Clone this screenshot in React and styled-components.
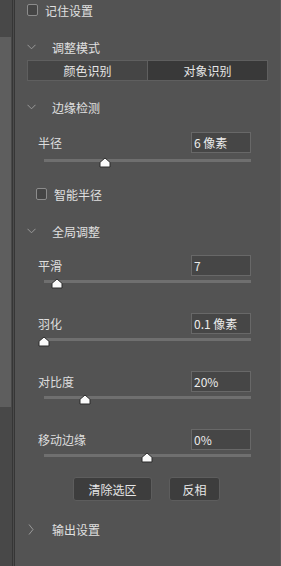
import React from "react";
import styled, { createGlobalStyle } from "styled-components";

const GlobalStyle = createGlobalStyle`
    html, body {
        margin: 0;
        padding: 0;
        background: #535353;
    }
    body {
        font-family: "Noto Sans CJK SC", "Liberation Sans", sans-serif;
        font-size: 12px;
        color: #dedede;
    }
`

const Frame = styled.div`
    display: flex;
    width: 281px;
    height: 566px;
    overflow: hidden;
`
const ScrollTrack = styled.div`
    width: 12px;
    background: #484848;
    display: flex;
    flex-direction: column;
`
const ScrollThumb = styled.div`
    margin-top: 37px;
    width: 11px;
    height: 370px;
    background: #5e5e5e;
`
const Divider = styled.div`
    width: 1px;
    background: #4b4b4b;
    border-left: 1px solid #363636;
    border-right: 1px solid #363636;
`
const Panel = styled.div`
    flex: 1;
    display: flex;
    flex-direction: column;
    background: #535353;
    border-right: 1px solid #5c5c5c;
`
const CheckRow = styled.label`
    display: flex;
    align-items: center;
    height: 20px;
    margin-top: ${p => p.mt || 0}px;
    padding-left: ${p => p.pl}px;
    gap: 7px;
    color: #e0e0e0;
`
const Box = styled.span`
    width: 9px;
    height: 10px;
    border: 1px solid #8c8c8c;
    border-radius: 2px;
    background: #454545;
`
const Header = styled.div`
    display: flex;
    align-items: center;
    height: 20px;
    margin-top: ${p => p.mt}px;
    padding-left: 12px;
    color: #e0e0e0;
`
const ChevronBox = styled.span`
    width: 25px;
    display: flex;
    align-items: center;
`
const Segmented = styled.div`
    display: flex;
    height: 19px;
    margin: 3px 12px 0 12px;
    border: 1px solid #5f5f5f;
`
const Segment = styled.div`
    flex: 1;
    display: flex;
    align-items: center;
    justify-content: center;
    background: ${p => p.active ? '#393939' : '#454545'};
    color: #e6e6e6;
    & + & {
        border-left: 1px solid #5f5f5f;
    }
`
const SliderBlock = styled.div`
    display: flex;
    flex-direction: column;
    margin-top: ${p => p.mt}px;
    padding: 0 29px 0 23px;
`
const LabelRow = styled.div`
    display: flex;
    align-items: center;
    justify-content: space-between;
    height: 21px;
`
const ValueBox = styled.div`
    box-sizing: border-box;
    width: 60px;
    height: 21px;
    padding-left: 2px;
    display: flex;
    align-items: center;
    background: #464646;
    border: 1px solid #686868;
    color: #ececec;
`
const Track = styled.div`
    position: relative;
    height: 3px;
    margin: ${p => p.gap}px 0 0 6px;
    background: #6f6f6f;
`
const Knob = styled.svg`
    position: absolute;
    top: -2px;
    width: 12px;
    height: 11px;
`
const ButtonRow = styled.div`
    display: flex;
    gap: 17px;
    margin-top: 20px;
    padding-left: 58px;
`
const Button = styled.button`
    box-sizing: border-box;
    width: ${p => p.w}px;
    height: 24px;
    padding: 0;
    background: #3d3d3d;
    border: 1px solid #5d5d5d;
    border-radius: 3px;
    color: #e6e6e6;
    font-family: "Noto Sans CJK SC", "Liberation Sans", sans-serif;
    font-size: 12px;
`

const ChevronDown = () => (
    <svg width="9" height="6" viewBox="0 0 9 6">
        <path d="M0.5 0.8 L4.5 4.8 L8.5 0.8" fill="none" stroke="#9a9a9a" strokeWidth="1" />
    </svg>
)
const ChevronRight = () => (
    <svg width="7" height="11" viewBox="0 0 7 11" style={{marginLeft: 1}}>
        <path d="M1 0.5 L5 5.5 L1 10.5" fill="none" stroke="#9a9a9a" strokeWidth="1" />
    </svg>
)

const Slider = ({label, value, pct, mt, gap = 4}) => (
    <SliderBlock mt={mt}>
        <LabelRow>
            <span>{label}</span>
            <ValueBox>{value}</ValueBox>
        </LabelRow>
        <Track gap={gap}>
            <Knob viewBox="0 0 12 11" style={{left: `calc(${pct}% - 6px)`}}>
                <path d="M1 10 L1 5.3 L6 1 L11 5.3 L11 10 Z" fill="#fafafa" stroke="#2b2b2b" strokeWidth="1" strokeLinejoin="round" />
            </Knob>
        </Track>
    </SliderBlock>
)

const Section = ({title, mt, open = true}) => (
    <Header mt={mt}>
        <ChevronBox>{open ? <ChevronDown /> : <ChevronRight />}</ChevronBox>
        <span>{title}</span>
    </Header>
)

const App = () => {
    return (
        <Frame>
            <GlobalStyle />
            <ScrollTrack>
                <ScrollThumb />
            </ScrollTrack>
            <Divider />
            <Panel>
                <CheckRow pl={12}><Box />记住设置</CheckRow>
                <Section title="调整模式" mt={17} />
                <Segmented>
                    <Segment>颜色识别</Segment>
                    <Segment active>对象识别</Segment>
                </Segmented>
                <Section title="边缘检测" mt={16} />
                <Slider label="半径" value="6 像素" pct={29.5} mt={15} gap={6} />
                <CheckRow pl={21} mt={22}><Box />智能半径</CheckRow>
                <Section title="全局调整" mt={17} />
                <Slider label="平滑" value="7" pct={6.5} mt={14} />
                <Slider label="羽化" value="0.1 像素" pct={0} mt={30} />
                <Slider label="对比度" value="20%" pct={19.8} mt={30} />
                <Slider label="移动边缘" value="0%" pct={49.8} mt={30} />
                <ButtonRow>
                    <Button w={79}>清除选区</Button>
                    <Button w={51}>反相</Button>
                </ButtonRow>
                <Section title="输出设置" mt={18} open={false} />
            </Panel>
        </Frame>
    )
}

export default App
